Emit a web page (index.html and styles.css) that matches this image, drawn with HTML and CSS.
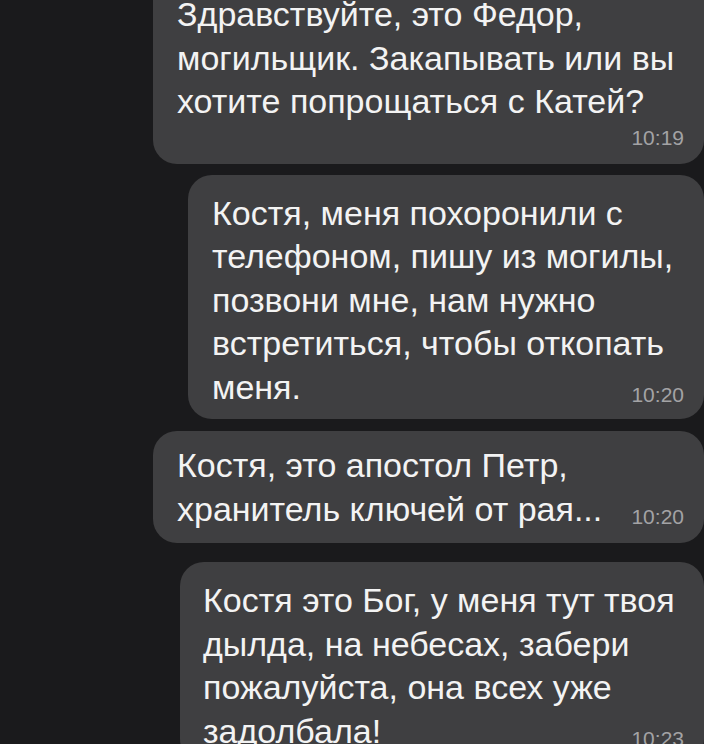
FILE: index.html
```html
<!DOCTYPE html>
<html lang="ru">
<head>
<meta charset="utf-8">
<title>Чат</title>
<link rel="stylesheet" href="styles.css">
</head>
<body>
<main class="chat">
  <div class="bubble bubble-1">
    <div class="line">Здравствуйте, это Федор,</div>
    <div class="line">могильщик. Закапывать или вы</div>
    <div class="line">хотите попрощаться с Катей?</div>
    <div class="meta-row"><span class="time">10:19</span></div>
  </div>
  <div class="bubble bubble-2">
    <div class="line">Костя, меня похоронили с</div>
    <div class="line">телефоном, пишу из могилы,</div>
    <div class="line">позвони мне, нам нужно</div>
    <div class="line">встретиться, чтобы откопать</div>
    <div class="last-row"><span class="line">меня.</span><span class="time">10:20</span></div>
  </div>
  <div class="bubble bubble-3">
    <div class="line">Костя, это апостол Петр,</div>
    <div class="last-row"><span class="line">хранитель ключей от рая...</span><span class="time">10:20</span></div>
  </div>
  <div class="bubble bubble-4">
    <div class="line">Костя это Бог, у меня тут твоя</div>
    <div class="line">дылда, на небесах, забери</div>
    <div class="line">пожалуйста, она всех уже</div>
    <div class="last-row"><span class="line">задолбала!</span><span class="time">10:23</span></div>
  </div>
</main>
</body>
</html>
```
FILE: styles.css
```css
html, body {
  margin: 0;
  padding: 0;
}
body {
  background: #1a1a1c;
  height: 744px;
  overflow: hidden;
  font-family: "Liberation Sans", Arial, sans-serif;
}
.chat {
  display: flex;
  flex-direction: column;
  align-items: flex-end;
  margin-top: -24px;
}
.bubble {
  box-sizing: border-box;
  background: #3f3f41;
  border-radius: 24px;
  color: #f3f3f3;
  font-size: 34px;
  line-height: 43.5px;
  padding: 17px 20px 10px 24px;
  white-space: nowrap;
}
.line {
  display: block;
}
.time {
  font-size: 21px;
  line-height: 24px;
  color: #a3a3a5;
}
.meta-row {
  display: flex;
  justify-content: flex-end;
  margin-top: 2px;
}
.last-row {
  display: flex;
  justify-content: space-between;
  align-items: flex-end;
}
.last-row .time {
  margin-bottom: 2px;
}
.bubble-1 {
  width: 551px;
  padding-bottom: 14px;
}
.bubble-2 {
  width: 516px;
  margin-top: 11px;
}
.bubble-3 {
  width: 551px;
  margin-top: 12px;
  padding-top: 13px;
  padding-bottom: 12px;
}
.bubble-4 {
  width: 524px;
  margin-top: 19px;
  padding-left: 23px;
}
```
